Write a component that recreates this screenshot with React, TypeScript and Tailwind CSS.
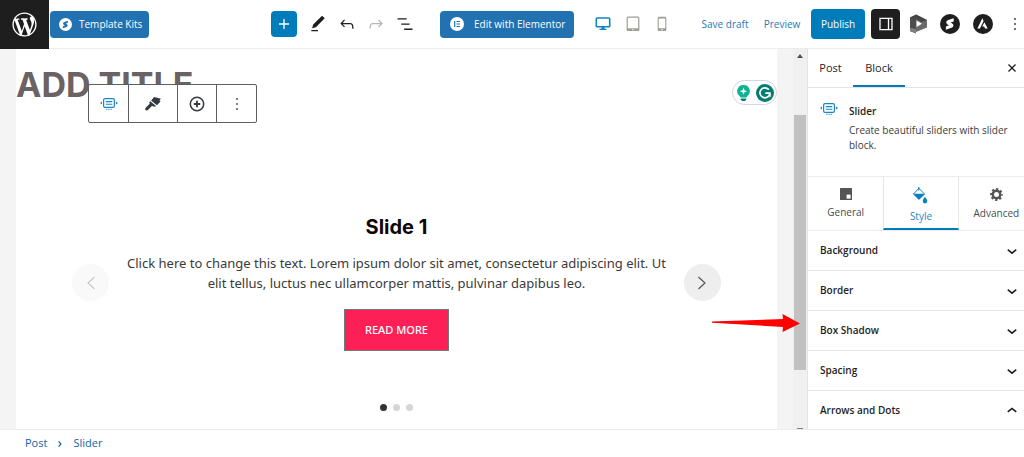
import type { ReactNode } from "react";

const panels = [
    { title: "Background", open: false },
    { title: "Border", open: false },
    { title: "Box Shadow", open: false },
    { title: "Spacing", open: false },
    { title: "Arrows and Dots", open: true },
];

function Icon({ d, className = "size-5" }: { d: string; className?: string }) {
    return (
        <svg className={`shrink-0 ${className}`} viewBox="0 0 24 24" fill="currentColor" aria-hidden="true">
            <path d={d} />
        </svg>
    );
}

function WordPressLogo() {
    return (
        <svg className="size-[29px]" viewBox="-2 -2 24 24" fill="currentColor" aria-hidden="true">
            <path d="M20 10c0-5.51-4.49-10-10-10C4.48 0 0 4.49 0 10c0 5.52 4.48 10 10 10 5.51 0 10-4.48 10-10zM7.78 15.37L4.37 6.22c.55-.02 1.17-.08 1.17-.08.5-.06.44-1.13-.06-1.11 0 0-1.45.11-2.37.11-.18 0-.37 0-.58-.01C4.12 2.69 6.87 1.11 10 1.11c2.33 0 4.45.87 6.05 2.34-.68-.11-1.65.39-1.65 1.58 0 .74.45 1.36.9 2.1.35.61.55 1.36.55 2.46 0 1.49-1.4 5-1.4 5l-3.03-8.37c.54-.02.82-.17.82-.17.5-.05.44-1.25-.06-1.22 0 0-1.44.12-2.38.12-.87 0-2.33-.12-2.33-.12-.5-.03-.56 1.2-.06 1.22l.92.08 1.26 3.41zM17.41 10c.24-.64.74-1.87.43-4.25.7 1.29 1.05 2.71 1.05 4.25 0 3.29-1.73 6.24-4.4 7.78.97-2.59 1.94-5.2 2.92-7.78zM6.1 18.09C3.12 16.65 1.11 13.53 1.11 10c0-1.3.23-2.48.72-3.59C3.25 10.3 4.67 14.2 6.1 18.09zm4.03-6.63l2.58 6.98c-.86.29-1.76.45-2.71.45-.79 0-1.57-.11-2.29-.33.81-2.38 1.62-4.74 2.42-7.1z" />
        </svg>
    );
}

// Round Spectra mark, used in the kits button and in the plugin bar
function SpectraLogo({ disc, bolt, className }: { disc: string; bolt: string; className: string }) {
    return (
        <svg className={className} viewBox="0 0 20 20" aria-hidden="true">
            <circle cx="10" cy="10" r="10" fill={disc} />
            <path d="M13.7 4.2 8.2 6.1c-2.2.9-2.6 3.3-.7 4.3l1.6.9-3.2 1.3v3.2l5.6-2c2.2-.9 2.6-3.3.7-4.3l-1.6-.9 3.1-1.2z" fill={bolt} />
        </svg>
    );
}

function AstraLogo() {
    return (
        <svg className="size-5" viewBox="0 0 20 20" aria-hidden="true">
            <circle cx="10" cy="10" r="10" fill="#1e1e1e" />
            <path d="M9.3 4.2 4.4 14.5h2.5l3.7-7.6zM11.4 8.2l-2.2 4.4h2l.8 1.9h2.7z" fill="#fff" />
        </svg>
    );
}

function PowerpackLogo() {
    return (
        <svg className="h-5 w-[18px]" viewBox="0 0 18 20" aria-hidden="true">
            <path d="M0 3.500 6 1v18.500L0 17z" fill="#4d4d4d" />
            <path d="M6 .5 17 6v7.500L6 18z" fill="#6a6a6a" />
            <path d="M0 3.500 6 .5 17 6l-5 2L6 5z" fill="#454545" />
            <path d="M0 14l6 1v4.500L0 17z" fill="#808080" />
            <path d="M6.500 6.500 12 9.800 6.500 13z" fill="#fff" />
        </svg>
    );
}

function SliderIcon({ className = "w-[18px]" }: { className?: string }) {
    return (
        <svg className={`h-3 shrink-0 ${className}`} viewBox="0 0 18 12" fill="none" stroke="#1a86c4" aria-hidden="true">
            <rect x="3.600" y=".6" width="10.800" height="8.800" rx="1.400" strokeWidth="1.200" />
            <path d="M5.700 3.600h6.600M5.700 6.300h6.600" strokeWidth="1.100" />
            <path d="M6.200 11.300h1.200M8.400 11.300h1.200M10.600 11.300h1.200" strokeWidth="1" />
            <path d="M2 3.500v3L0 5zM16 3.500v3l2-1.500z" fill="#1a86c4" stroke="none" />
        </svg>
    );
}

function ToolbarButton({ label, className, children }: { label: string; className: string; children: ReactNode }) {
    return (
        <button aria-label={label} className={`flex items-center justify-center ${className}`}>
            {children}
        </button>
    );
}

function Header() {
    return (
        <header className="flex h-[49px] shrink-0 items-center border-b border-[#ececec] bg-white text-[#1e1e1e]">
            <a href="#dashboard" aria-label="WordPress" className="flex h-[49px] w-[49px] shrink-0 items-center justify-center bg-[#1e1e1e] text-white">
                <WordPressLogo />
            </a>
            <button className="ml-px flex h-[27px] w-[99px] shrink-0 items-center gap-[7px] rounded-sm bg-[#2271b1] pl-[9px] text-[10px] whitespace-nowrap text-white">
                <SpectraLogo disc="#fff" bolt="#2271b1" className="size-[13px] shrink-0" />
                Template Kits
            </button>

            <div className="ml-auto flex items-center">
                <button aria-label="Add block" className="flex size-[26px] items-center justify-center rounded-sm bg-[#007cba] text-white">
                    <Icon d="M18 11.2h-5.2V6h-1.6v5.2H6v1.6h5.2V18h1.6v-5.2H18z" />
                </button>
                <div className="ml-[11px] flex gap-[9px]">
                    <button aria-label="Tools">
                        <Icon d="M20.1 5.1L16.9 2 6.2 12.7l-1.3 4.4 4.5-1.3L20.1 5.1zM4 20.8h8v-1.5H4v1.5z" />
                    </button>
                    <button aria-label="Undo">
                        <Icon d="M18.3 11.7c-.6-.6-1.4-.9-2.3-.9H6.7l2.900-3.300-1.100-1-4.500 5L8.500 16l1-1-2.700-2.700H16c.5 0 .9.2 1.300.5 1 1 1 3.400 1 4.500v.3h1.500v-.2c0-1.500 0-4.300-1.500-5.700z" />
                    </button>
                    <button aria-label="Redo" className="text-[#b5b5b5]">
                        <Icon d="M15.6 6.5l-1.1 1 2.9 3.3H8c-.9 0-1.7.3-2.3.9-1.4 1.5-1.4 4.2-1.4 5.600v.2h1.500v-.3c0-1.100 0-3.500 1-4.500.3-.3.7-.5 1.300-.5h9.200L14.500 15l1.100 1.100 4.600-4.600-4.600-5z" />
                    </button>
                    <button aria-label="Document overview">
                        <Icon d="M3 5h11v1.700H3V5Zm4.500 6.300h10V13h-10v-1.700ZM21 17.500H11v1.700h10v-1.700Z" />
                    </button>
                </div>
                <button className="ml-[25px] flex h-[27px] w-[134px] items-center gap-[10px] rounded-sm bg-[#2271b1] pl-[10px] text-[10px] whitespace-nowrap text-white">
                    <svg className="size-[14px] shrink-0" viewBox="0 0 14 14" aria-hidden="true">
                        <circle cx="7" cy="7" r="7" fill="#fff" />
                        <path d="M4.700 4v6M6.500 4.500H10M6.500 7H10M6.500 9.500H10" stroke="#2271b1" strokeWidth="1.200" />
                    </svg>
                    Edit with Elementor
                </button>
                <div className="ml-[21px] flex items-center text-[#9aa093]">
                    <button aria-label="Desktop view" className="text-[#1183c2]">
                        <svg className="h-[14px] w-4" viewBox="0 0 16 14" aria-hidden="true">
                            <rect x="1.300" y="1" width="13.400" height="8.800" rx=".8" fill="none" stroke="currentColor" strokeWidth="1.600" />
                            <path d="M6.500 10h3v1.800h2V13h-7v-1.200h2z" fill="currentColor" />
                        </svg>
                    </button>
                    <button aria-label="Tablet view" className="ml-[15px]">
                        <svg className="h-4 w-[14px]" viewBox="0 0 14 16" aria-hidden="true">
                            <rect x="1.200" y="1.200" width="11.600" height="13.200" rx="1" fill="none" stroke="currentColor" strokeWidth="1.200" />
                            <path d="M1 12.300h12V15H1z" fill="currentColor" />
                            <circle cx="7" cy="13.700" r=".7" fill="#fff" />
                        </svg>
                    </button>
                    <button aria-label="Mobile view" className="ml-[17px]">
                        <svg className="h-4 w-[10px]" viewBox="0 0 10 16" aria-hidden="true">
                            <rect x="1.200" y="1.200" width="7.600" height="13.200" rx="1" fill="none" stroke="currentColor" strokeWidth="1.100" />
                            <path d="M1 12.300h8V15H1zM1 1h8v1.600H1z" fill="currentColor" />
                            <circle cx="5" cy="13.700" r=".7" fill="#fff" />
                        </svg>
                    </button>
                </div>
            </div>

            <div className="ml-[34px] flex shrink-0 items-center">
                <button className="w-[48px] text-[10px] whitespace-nowrap text-[#1f7ab8]">Save draft</button>
                <button className="ml-[14px] w-[38px] text-[10px] whitespace-nowrap text-[#1f7ab8]">Preview</button>
                <button className="ml-[10px] h-[30px] w-[54px] rounded-sm bg-[#007cba] text-[10px] text-white">Publish</button>
                <button aria-label="Settings" className="ml-[6px] flex h-[30px] w-[29px] items-center justify-center rounded-sm bg-[#1e1e1e] text-white">
                    <svg className="h-[14px] w-[14px]" viewBox="0 0 14 14" fill="none" stroke="currentColor" strokeWidth="1.300" aria-hidden="true">
                        <path d="M1 1.300h12v11.400H1zM9.500 1v12" />
                    </svg>
                </button>
                <button aria-label="PowerPack" className="ml-[10px]"><PowerpackLogo /></button>
                <button aria-label="Spectra" className="ml-3">
                    <SpectraLogo disc="#1e1e1e" bolt="#fff" className="size-5" />
                </button>
                <button aria-label="Astra" className="ml-[13px]"><AstraLogo /></button>
                <button aria-label="Options" className="ml-3 w-[19px] overflow-hidden">
                    <Icon d="M13 19h-2v-2h2v2zm0-6h-2v-2h2v2zm0-6h-2V5h2v2z" />
                </button>
            </div>
        </header>
    );
}

function BlockToolbar() {
    return (
        <div role="toolbar" aria-label="Block tools" className="absolute top-[35px] left-[72px] flex h-[39px] divide-x divide-[#5f5f5f] rounded-xs border border-[#5f5f5f] bg-white text-[#333a40]">
            <ToolbarButton label="Slider" className="w-10"><SliderIcon /></ToolbarButton>
            <ToolbarButton label="Copy styles" className="w-[49px]">
                <svg className="h-[14px] w-4" viewBox="0 0 16 14" fill="currentColor" aria-hidden="true">
                    <path d="M9.200 0 16 1.800l-1.600 1.400 1.100 1.200-3.600 3.900-5.800-4.700z" />
                    <path d="M5.300 4.300l5.700 4.600-1.200.9-2.900-.7L2.900 13.100c-1.600 1.200-3.500-.6-2.400-2.100l4.200-4.200-.5-1.600z" />
                </svg>
            </ToolbarButton>
            <ToolbarButton label="Add slide" className="w-[39px]">
                <svg className="size-4" viewBox="0 0 16 16" fill="none" stroke="currentColor" aria-hidden="true">
                    <circle cx="8" cy="8" r="6.700" strokeWidth="1.500" />
                    <path d="M8 4.800v6.400M4.800 8h6.400" strokeWidth="1.800" />
                </svg>
            </ToolbarButton>
            <ToolbarButton label="More" className="w-[39px]">
                <Icon d="M13 19h-2v-2h2v2zm0-6h-2v-2h2v2zm0-6h-2V5h2v2z" />
            </ToolbarButton>
        </div>
    );
}

function WritingBadge() {
    return (
        <div className="absolute top-[31px] right-0 flex h-[25px] w-[45px] items-center justify-end gap-[6px] rounded-full border border-[#d3d6e6] bg-white pr-[2px]">
            <svg className="h-4 w-[13px]" viewBox="0 0 13 16" aria-hidden="true">
                <path d="M6.500 0a6.200 6.200 0 0 1 3.800 11.200l-1 1.300H3.700l-1-1.300A6.200 6.200 0 0 1 6.500 0z" fill="#0db393" />
                <path d="M3.700 13.600h5.600v.8L8 16H5l-1.300-1.600z" fill="#027e6f" />
                <path d="M6.500 2.600 7.500 5.200 10.100 6.200 7.500 7.200 6.500 9.800 5.500 7.200 2.900 6.200 5.500 5.200z" fill="#fff" />
            </svg>
            <svg className="size-[18px]" viewBox="0 0 18 18" aria-hidden="true">
                <circle cx="9" cy="9" r="9" fill="#027e6f" />
                <path d="M12.800 5.600A5 5 0 1 0 13.800 10" fill="none" stroke="#fff" strokeWidth="1.700" />
                <path d="M9.300 9.200h4.600v3.600" fill="none" stroke="#fff" strokeWidth="1.700" />
            </svg>
        </div>
    );
}

function Canvas() {
    return (
        <main className="relative mx-4 flex min-w-0 flex-1 flex-col bg-white">
            <h1 className="mt-3 font-[Inter,sans-serif] text-[34px] leading-[48px] font-bold text-[#6b6264]">ADD TITLE</h1>
            <BlockToolbar />
            <WritingBadge />
            <section aria-label="Slider" className="mt-[105px] flex flex-col px-14">
                <div className="flex items-center justify-between">
                    <button aria-label="Previous slide" className="flex size-[37px] shrink-0 items-center justify-center rounded-full bg-[#f9f9f9] text-[#c8c8c8]">
                        <svg className="h-[14px] w-2" viewBox="0 0 8 14" fill="none" stroke="currentColor" aria-hidden="true">
                            <path d="M7.500 1 1 7l6.500 6" strokeWidth="1.200" />
                        </svg>
                    </button>
                    <div className="flex max-w-[560px] flex-col items-center text-center">
                        <h2 className="font-[Inter,sans-serif] text-[20px] leading-[26px] font-bold text-[#0f0608]">Slide 1</h2>
                        <p className="mt-[13px] font-['Noto_Sans',sans-serif] text-[13px] leading-[20px] text-[#3a3a3a]">
                            Click here to change this text. Lorem ipsum dolor sit amet, consectetur adipiscing elit. Ut<br />
                            elit tellus, luctus nec ullamcorper mattis, pulvinar dapibus leo.
                        </p>
                        <a href="#read-more" className="mt-4 border border-[#6d7a75] bg-[#fd2056] px-5 py-[10px] font-['Noto_Sans',sans-serif] text-[11px] leading-[20px] font-medium text-white">
                            READ MORE
                        </a>
                    </div>
                    <button aria-label="Next slide" className="flex size-[37px] shrink-0 items-center justify-center rounded-full bg-[#eeeeee] text-[#555555]">
                        <svg className="h-[14px] w-2" viewBox="0 0 8 14" fill="none" stroke="currentColor" aria-hidden="true">
                            <path d="M.5 1 7 7 .5 13" strokeWidth="1.200" />
                        </svg>
                    </button>
                </div>
                <div className="mt-[53px] flex justify-center gap-[6px]">
                    <button aria-label="Slide 1" className="size-[7px] rounded-full bg-[#333333]" />
                    <button aria-label="Slide 2" className="size-[7px] rounded-full bg-[#d6d6d6]" />
                    <button aria-label="Slide 3" className="size-[7px] rounded-full bg-[#d6d6d6]" />
                </div>
            </section>
        </main>
    );
}

function Scrollbar() {
    return (
        <div className="flex w-[14px] shrink-0 flex-col bg-[#f0f0f0]" aria-hidden="true">
            <svg className="mx-auto mt-[5px] h-1 w-[6px]" viewBox="0 0 6 4"><path d="M3 0l3 4H0z" fill="#505050" /></svg>
            <div className="mx-px mt-[57px] h-[255px] bg-[#c1c1c1]" />
            <div className="mx-auto mt-auto h-px w-[6px] bg-[#7c7c7c]" />
        </div>
    );
}

// Callout that points at the Box Shadow panel
function PointerArrow() {
    return (
        <svg className="absolute right-[224px] bottom-[97px] h-[18px] w-[88px]" viewBox="0 0 88 18" aria-hidden="true">
            <path d="M0 7.500 71 5 70.500 0 88 9.500 70.500 18 71 13 0 8.700z" fill="#fe0000" />
        </svg>
    );
}

function Sidebar() {
    return (
        <aside className="w-[217px] shrink-0 overflow-hidden border-l border-[#e4e4e4] bg-white text-[#1e1e1e]">
            <div className="flex h-[39px] items-center border-b border-[#e4e4e4] text-[11px]">
                <button className="h-full w-[45px]">Post</button>
                <button className="h-full w-[52px] border-b-2 border-[#007cba] pt-[2px]">Block</button>
                <button aria-label="Close settings" className="mr-[2px] ml-auto">
                    <Icon d="M12 13.06l3.712 3.713 1.061-1.060L13.061 12l3.712-3.712-1.060-1.060L12 10.938 8.288 7.227l-1.061 1.060L10.939 12l-3.712 3.712 1.060 1.061L12 13.061z" />
                </button>
            </div>
            <div className="flex h-[88px] gap-[11px] pt-[15px] pl-3">
                <SliderIcon />
                <div className="text-[10px]">
                    <h2 className="leading-[16px] font-semibold">Slider</h2>
                    <p className="mt-1 leading-[15px] whitespace-nowrap text-[#3c3c3c]">
                        Create beautiful sliders with slider<br />block.
                    </p>
                </div>
            </div>
            <div className="grid h-[55px] w-[226px] grid-cols-3 border-y border-[#ececec] text-[10px] leading-[14px] text-[#454b51]">
                <button className="flex flex-col items-center justify-center gap-[5px]">
                    <svg className="size-3" viewBox="0 0 12 12" aria-hidden="true">
                        <rect width="12" height="12" rx=".6" fill="#555" />
                        <rect x="6.600" y="6.600" width="4" height="4" fill="#fff" />
                    </svg>
                    General
                </button>
                <button className="flex flex-col items-center justify-center gap-[5px] border-x border-b-2 border-x-[#e4e4e4] border-b-[#007cba] pt-1 text-[#1f8ac5]">
                    <svg className="h-[17px] w-[15px]" viewBox="0 0 15 17" aria-hidden="true">
                        <path d="M5.800 1.300 11.600 7 5.900 12.200.5 7z" fill="none" stroke="#1a86c4" strokeWidth="1" />
                        <path d="M.3 6.700h11.500L5.900 12.700zM5.300 0h1v3.500h-1z" fill="#0581be" />
                        <path d="M12 9.800c1 1.600 2.300 3 2.300 4.300a2.300 2.300 0 0 1-4.600 0c0-1.300 1.300-2.700 2.300-4.300z" fill="#0581be" />
                    </svg>
                    Style
                </button>
                <button className="flex flex-col items-center justify-center gap-[5px]">
                    <svg className="size-[13px]" viewBox="0 0 13 13" aria-hidden="true">
                        <circle cx="6.500" cy="6.500" r="3.700" fill="none" stroke="#555" strokeWidth="2.400" />
                        <circle cx="6.500" cy="6.500" r="5.400" fill="none" stroke="#555" strokeWidth="2" strokeDasharray="2.300 1.940" strokeDashoffset="1.150" />
                    </svg>
                    Advanced
                </button>
            </div>
            {panels.map((panel) => (
                <button
                    key={panel.title}
                    aria-expanded={panel.open}
                    className="flex h-10 w-full items-center justify-between border-b border-[#e8e8e8] pr-[2px] pl-3 text-[10px] font-semibold"
                >
                    {panel.title}
                    {panel.open ? (
                        <Icon d="M6.300 12.300L12 7.700l5.700 4.600-1.200 1.500L12 10.200l-4.500 3.600-1.200-1.500z" />
                    ) : (
                        <Icon d="M17.700 11.200L12 15.800l-5.700-4.600 1.200-1.500L12 13.300l4.500-3.600 1.200 1.500z" />
                    )}
                </button>
            ))}
        </aside>
    );
}

export default function App() {
    return (
        <div className="flex h-screen flex-col overflow-hidden bg-white font-['Open_Sans',sans-serif]">
            <Header />
            <div className="relative flex min-h-0 flex-1 overflow-hidden border-b border-[#ececec] bg-[#f4f4f4]">
                <Canvas />
                <Scrollbar />
                <Sidebar />
                <PointerArrow />
            </div>
            <footer className="flex h-[27px] shrink-0 items-center gap-[5px] pl-[25px] text-[11px] font-medium text-[#0b65a3]">
                <a href="#post">Post</a>
                <Icon d="M10.600 7.500L9.200 8.700l3 3.300-3 3.300 1.400 1.200 4-4.500z" className="size-4" />
                <a href="#slider">Slider</a>
            </footer>
        </div>
    );
}
